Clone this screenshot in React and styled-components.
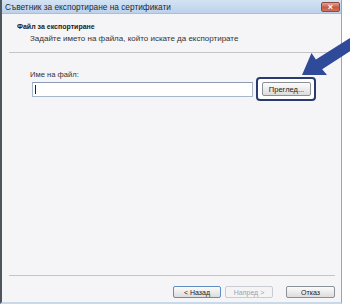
import styled, { createGlobalStyle } from 'styled-components'

const Global = createGlobalStyle`
  html, body {
    margin: 0;
    padding: 0;
    background: #ffffff;
  }
  body {
    font-family: "Liberation Sans", Arial, sans-serif;
  }
`

const Page = styled.div`
  position: relative;
  width: 350px;
  height: 308px;
  overflow: hidden;
  background: #ffffff;
`

const Dialog = styled.div`
  width: 339px;
  height: 302px;
  display: flex;
  flex-direction: column;
  background: #f5f4f7;
  border-left: 2px solid #50555e;
  border-right: 1px solid #9aa6b6;
  border-bottom: 2px solid #c9d9ea;
`

const TitleBar = styled.div`
  height: 14px;
  flex: none;
  display: flex;
  align-items: center;
  justify-content: space-between;
  padding: 0 1px 0 3px;
  background: linear-gradient(#d3e3f3, #bcd2ea);
  border-bottom: 1px solid #a9bfd8;
  box-sizing: border-box;
`

const Title = styled.span`
  font-size: 8.3px;
  color: #1f2a36;
  white-space: nowrap;
`

const CloseButton = styled.div`
  width: 19px;
  height: 10px;
  margin-top: 1px;
  border-radius: 2px;
  border: 1px solid #8e4a3e;
  box-sizing: border-box;
  background: linear-gradient(#e3a290, #c65a44 55%, #d0735e);
  display: flex;
  align-items: center;
  justify-content: center;
  color: #ffffff;
  font-size: 9px;
  font-weight: bold;
  line-height: 1;
`

const Header = styled.div`
  height: 39px;
  flex: none;
  box-sizing: border-box;
  padding: 8px 0 0 15px;
  margin-right: 4px;
  margin-left: 7px;
  border-bottom: 1px solid #c5c4c8;
  display: flex;
  flex-direction: column;
`

const HeaderTitle = styled.div`
  font-size: 7px;
  font-weight: bold;
  color: #222;
  height: 10px;
  line-height: 10px;
  margin-left: -7px;
`

const HeaderText = styled.div`
  font-size: 8px;
  color: #333;
  margin-top: 2px;
  margin-left: 6px;
  line-height: 10px;
`

const Content = styled.div`
  flex: 1;
  display: flex;
  flex-direction: column;
  padding: 17px 0 0 28px;
`

const Label = styled.div`
  font-size: 7.6px;
  color: #333;
  line-height: 10px;
`

const FieldRow = styled.div`
  display: flex;
  align-items: center;
  margin-top: -3px;
`

const Input = styled.div`
  width: 221px;
  height: 15px;
  margin-left: 2px;
  box-sizing: border-box;
  background: #ffffff;
  border: 1px solid #a7b7cb;
  border-top-color: #8b9bb0;
  display: flex;
  align-items: center;
  padding-left: 2px;
`

const Caret = styled.span`
  width: 1px;
  height: 9px;
  background: #222;
`

const Highlight = styled.div`
  margin-left: 3px;
  width: 60px;
  height: 24px;
  box-sizing: border-box;
  border: 2px solid #2b3a6c;
  border-radius: 4px;
  background: #ffffff;
  display: flex;
  align-items: center;
  justify-content: center;
  padding-left: 1px;
`

const Button = styled.div`
  width: ${(p) => p.$w || 48}px;
  height: ${(p) => p.$h || 12}px;
  box-sizing: border-box;
  border: 1px solid ${(p) => (p.$default ? '#5f8dbf' : p.$disabled ? '#c9ccd2' : '#8c9097')};
  border-radius: 2px;
  background: ${(p) =>
    p.$disabled ? '#f4f4f6' : 'linear-gradient(#fbfbfb, #ececec 50%, #dcdcdc)'};
  display: flex;
  align-items: center;
  justify-content: center;
  font-size: ${(p) => p.$fs || 7}px;
  color: ${(p) => (p.$disabled ? '#a0a3a8' : '#222')};
  white-space: nowrap;
`

const Footer = styled.div`
  flex: none;
  height: 27px;
  margin: 0 6px 0 7px;
  border-top: 1px solid #c5c4c8;
  display: flex;
  justify-content: flex-end;
  align-items: flex-start;
  padding-top: 10px;
  box-sizing: border-box;
  gap: 4px;
`

const Spacer = styled.div`
  width: 5px;
`

const Arrow = styled.svg`
  position: absolute;
  left: 0;
  top: 0;
  pointer-events: none;
`

export default function App() {
  return (
    <Page>
      <Global />
      <Dialog>
        <TitleBar>
          <Title>Съветник за експортиране на сертификати</Title>
          <CloseButton>×</CloseButton>
        </TitleBar>
        <Header>
          <HeaderTitle>Файл за експортиране</HeaderTitle>
          <HeaderText>Задайте името на файла, който искате да експортирате</HeaderText>
        </Header>
        <Content>
          <Label>Име на файл:</Label>
          <FieldRow>
            <Input>
              <Caret />
            </Input>
            <Highlight>
              <Button $w={49} $h={14} $fs={7.5}>Преглед...</Button>
            </Highlight>
          </FieldRow>
        </Content>
        <Footer>
          <Button $default>&lt; Назад</Button>
          <Button $disabled>Напред &gt;</Button>
          <Spacer />
          <Button $w={49}>Отказ</Button>
        </Footer>
      </Dialog>
      <Arrow width="350" height="308" viewBox="0 0 350 308">
        <polygon
          points="302,75 311.5,53 315.9,59.4 350,38 356,47.5 322.2,69.3 327,75"
          fill="#2e4a99"
        />
      </Arrow>
    </Page>
  )
}
